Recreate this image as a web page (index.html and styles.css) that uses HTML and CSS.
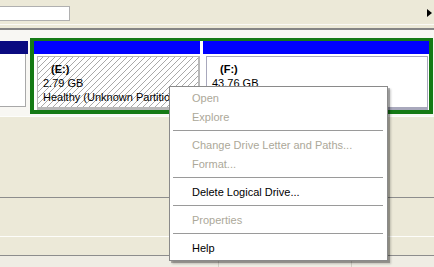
FILE: index.html
```html
<!DOCTYPE html>
<html lang="en">
<head>
    <meta charset="UTF-8">
    <title>Disk Management</title>
    <link rel="stylesheet" href="styles.css">
</head>
<body>

<!-- Toolbar strip -->
<div class="toolbar">
    <div class="search"></div>
    <span class="arrow"></span>
</div>
<div class="rule"></div>

<!-- Disk graphic -->
<div class="disk">
    <div class="primary">
        <div class="bar navy"></div>
        <div class="primary-body"></div>
    </div>
    <div class="extended">
        <div class="part part-e">
            <div class="bar"></div>
            <div class="part-body">
                <div class="frame hatch">
                    <div class="label">(E:)</div>
                    <div>2.79 GB</div>
                    <div>Healthy (Unknown Partition)</div>
                </div>
            </div>
        </div>
        <div class="part part-f">
            <div class="bar"></div>
            <div class="part-body">
                <div class="frame plain">
                    <div class="label">(F:)</div>
                    <div>43.76 GB</div>
                </div>
            </div>
        </div>
    </div>
</div>

<!-- Lower panes -->
<div class="pane pane-top"></div>
<div class="pane pane-mid"></div>
<div class="list-head">
    <div class="col col-1"></div>
    <div class="col col-2"></div>
    <div class="col col-3"></div>
</div>

<!-- Context menu -->
<ul class="menu">
    <li class="item disabled">Open</li>
    <li class="item disabled">Explore</li>
    <li class="sep"></li>
    <li class="item disabled">Change Drive Letter and Paths...</li>
    <li class="item disabled">Format...</li>
    <li class="sep"></li>
    <li class="item">Delete Logical Drive...</li>
    <li class="sep"></li>
    <li class="item disabled">Properties</li>
    <li class="sep"></li>
    <li class="item">Help</li>
</ul>

</body>
</html>
```

FILE: styles.css
```css
body {
    margin: 0;
    height: 267px;
    overflow: hidden;
    background-color: #ece9d8;
    font-family: "Liberation Sans", Arial, sans-serif;
    font-size: 11px;
    color: #000;
}

/* Toolbar */
.toolbar {
    height: 24px;
    display: flex;
    justify-content: space-between;
    border-bottom: 1px solid #fbfaf6;
}

.search {
    width: 71px;
    height: 15px;
    box-sizing: border-box;
    margin: 6px 0 0 -1px;
    background-color: #fff;
    border: 1px solid #b0b0b0;
}

.arrow {
    width: 0;
    height: 0;
    margin: 9px 2px 0 0;
    border-left: 5px solid #000;
    border-top: 4.5px solid transparent;
    border-bottom: 4.5px solid transparent;
}

.rule {
    height: 2px;
    margin-top: 3px;
    background-color: #858585;
}

/* Disk graphic */
.disk {
    display: flex;
    gap: 2px;
    padding: 8px 1px 2px 0;
    background-color: #f8f7f3;
    border-bottom: 1px solid #fdfdfb;
}

.primary {
    width: 28px;
    margin-top: 3px;
    display: flex;
    flex-direction: column;
}

.bar {
    height: 13px;
    background-color: #0000ff;
}

.bar.navy {
    background-color: #0a0a80;
}

.primary-body {
    height: 52px;
    margin-right: 2px;
    background-color: #fff;
    border-right: 1px solid #a8a8a8;
    border-bottom: 1px solid #a8a8a8;
}

.extended {
    flex: 1;
    display: flex;
    gap: 3px;
    background-color: #fff;
    border: 4px solid #157a15;
    border-top-width: 3px;
}

.part-e {
    width: 166px;
}

.part-f {
    flex: 1;
}

.part-body {
    height: 56px;
    box-sizing: border-box;
    padding: 2px 0 0 3px;
}

.frame {
    height: 100%;
    box-sizing: border-box;
    padding: 5px 0 0 5px;
    line-height: 14px;
    white-space: nowrap;
    overflow: hidden;
}

.frame.hatch {
    border-style: solid;
    border-color: #b8b8b8;
    border-width: 1px 2px 3px 1px;
    background-color: #fff;
    background-image: repeating-linear-gradient(135deg, #fff 0, #fff 3.2px, #a9a9a9 3.2px, #a9a9a9 4.24px);
}

.frame.plain {
    margin-right: 1px;
    border: 1px solid #a8a8bc;
    border-bottom-width: 3px;
    background-color: #fff;
}

.label {
    padding-left: 8px;
    font-weight: bold;
}

/* Lower panes */
.pane-top {
    height: 80px;
    border-bottom: 1px solid #8d8d8d;
}

.pane-mid {
    height: 38px;
    border-bottom: 1px solid #fdfdfa;
}

.list-head {
    display: flex;
    height: 11px;
    margin-top: 18px;
    border-top: 1px solid #8d8d8d;
    background-color: #efede4;
}

.col {
    box-sizing: border-box;
    border-right: 1px solid #d2d0c6;
}

.col-1 {
    width: 219px;
}

.col-2 {
    width: 133px;
}

.col-3 {
    flex: 1;
    border-right: none;
}

/* Context menu */
.menu {
    position: absolute;
    top: 86px;
    left: 169px;
    width: 219px;
    box-sizing: border-box;
    margin: 0;
    padding: 2px 0 2px 0;
    list-style: none;
    background-color: #fff;
    border: 1px solid #8a8a8a;
    box-shadow: 2px 2px 0 rgba(0, 0, 0, 0.25), 3px 3px 2px rgba(0, 0, 0, 0.2);
}

.item {
    height: 19px;
    line-height: 19px;
    padding-left: 22px;
    white-space: nowrap;
}

.item.disabled {
    color: #aca899;
}

.sep {
    height: 1px;
    margin: 3px 4px 5px 3px;
    background-color: #9a9a9a;
}
```
